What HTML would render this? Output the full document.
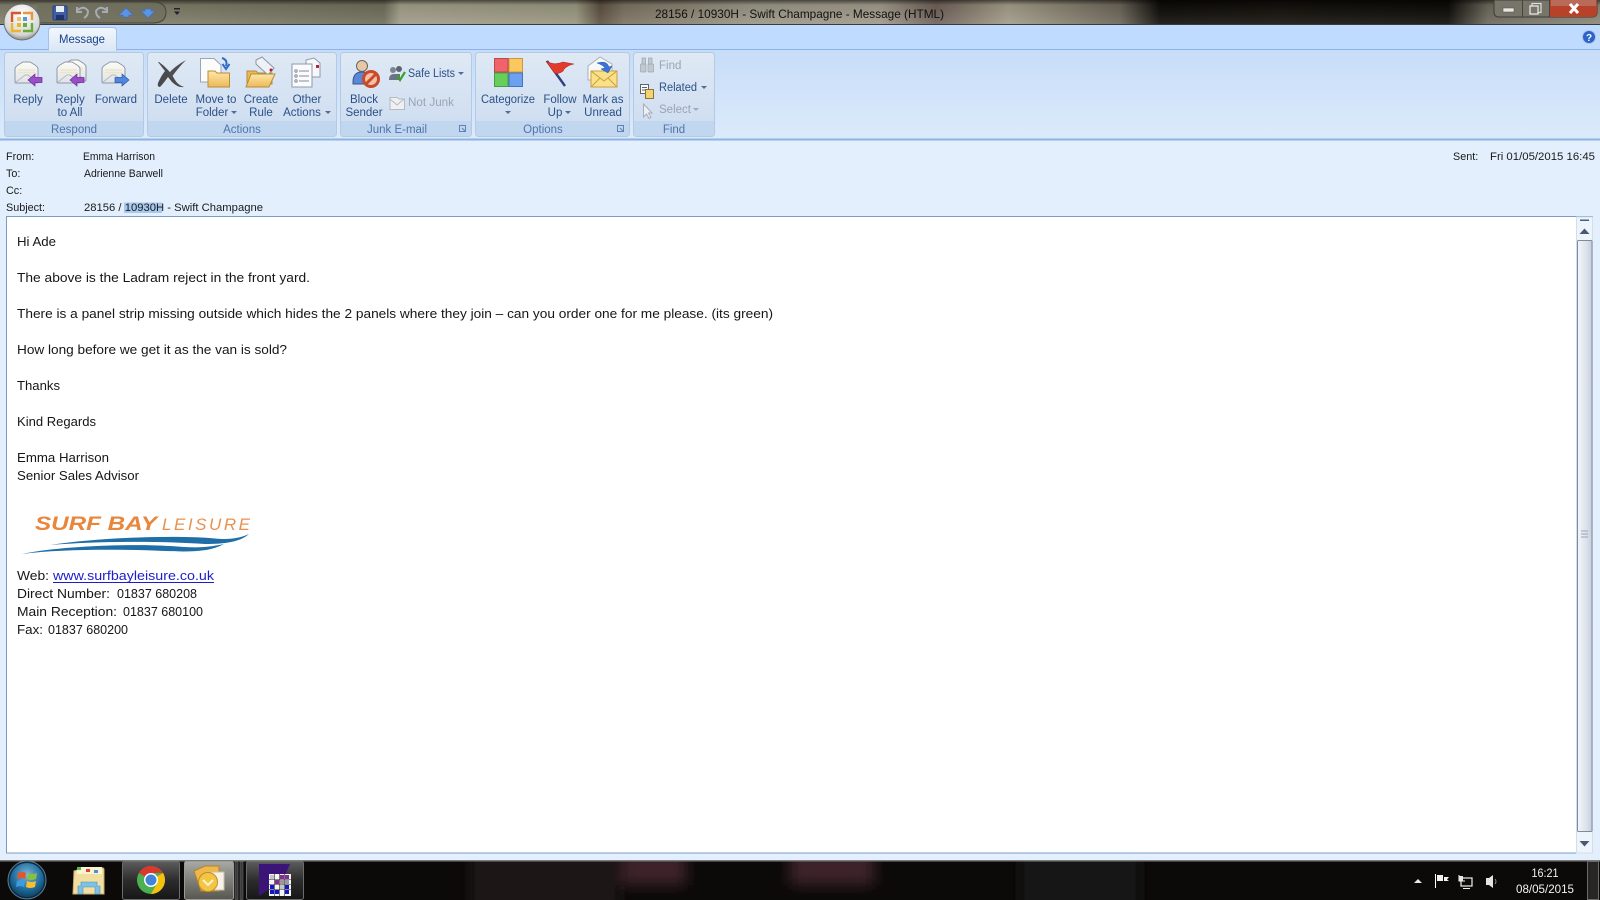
<!DOCTYPE html>
<html lang="en"><head><meta charset="utf-8"><title>28156 / 10930H - Swift Champagne - Message (HTML)</title>
<style>
html,body{margin:0;padding:0;width:1600px;height:900px;overflow:hidden;background:#e3effd}
svg{display:block;position:absolute;left:0;top:0}
text{font-family:"Liberation Sans",Arial,sans-serif}
.rb{font-size:11.5px;fill:#2a5088;text-anchor:middle}
.gl{font-size:11.5px;fill:#4f74aa;text-anchor:middle}
.sm{font-size:11.5px;fill:#2a5088}
.dis{font-size:11.5px;fill:#9aa4b2}
.hd{font-size:10.8px;fill:#1a1a1a}
.bd{font-size:13.2px;fill:#161616}
</style></head><body>
<svg width="1600" height="900" viewBox="0 0 1600 900" xmlns="http://www.w3.org/2000/svg">
<defs>
<linearGradient id="tb" x1="0" x2="1" y1="0" y2="0">
<stop offset="0" stop-color="#837f6c"/><stop offset=".09" stop-color="#807d69"/><stop offset=".24" stop-color="#6f6d5a"/><stop offset=".25" stop-color="#a09e88"/><stop offset=".36" stop-color="#98967f"/><stop offset=".375" stop-color="#5c5040"/><stop offset=".39" stop-color="#7b7160"/><stop offset=".47" stop-color="#9a9686"/><stop offset=".55" stop-color="#a09a8a"/><stop offset=".585" stop-color="#6e6058"/><stop offset=".63" stop-color="#a39c88"/><stop offset=".7" stop-color="#6b6558"/><stop offset=".725" stop-color="#0f0d09"/><stop offset=".8" stop-color="#14110c"/><stop offset=".905" stop-color="#0d0c08"/><stop offset=".93" stop-color="#6c685a"/><stop offset="1" stop-color="#8a8878"/>
</linearGradient>
<linearGradient id="tv" x1="0" x2="0" y1="0" y2="1"><stop offset="0" stop-color="#000" stop-opacity=".55"/><stop offset=".2" stop-color="#000" stop-opacity=".08"/><stop offset="1" stop-color="#fff" stop-opacity=".1"/></linearGradient>
<linearGradient id="rib" x1="0" x2="0" y1="0" y2="1"><stop offset="0" stop-color="#c6dcf8"/><stop offset="1" stop-color="#dcebfb"/></linearGradient>
<linearGradient id="grp" x1="0" x2="0" y1="0" y2="1"><stop offset="0" stop-color="#dfe9f5"/><stop offset="1" stop-color="#ccdcf0"/></linearGradient>
<linearGradient id="tab" x1="0" x2="0" y1="0" y2="1"><stop offset="0" stop-color="#f2f7fd"/><stop offset="1" stop-color="#dbe7f6"/></linearGradient>
<linearGradient id="thumb" x1="0" x2="1" y1="0" y2="0"><stop offset="0" stop-color="#f3f6fa"/><stop offset=".6" stop-color="#dde3ec"/><stop offset="1" stop-color="#c6cedb"/></linearGradient>
<linearGradient id="env" x1="0" x2="0" y1="0" y2="1"><stop offset="0" stop-color="#fdfcf5"/><stop offset="1" stop-color="#dfe3e8"/></linearGradient>
<linearGradient id="fold" x1="0" x2="0" y1="0" y2="1"><stop offset="0" stop-color="#fde6a8"/><stop offset="1" stop-color="#eeb957"/></linearGradient>
<linearGradient id="btn" x1="0" x2="0" y1="0" y2="1"><stop offset="0" stop-color="#5c5c5c"/><stop offset=".5" stop-color="#2c2c2c"/><stop offset="1" stop-color="#161616"/></linearGradient>
<linearGradient id="btn2" x1="0" x2="0" y1="0" y2="1"><stop offset="0" stop-color="#a9a9a5"/><stop offset=".5" stop-color="#7f7f7a"/><stop offset="1" stop-color="#575750"/></linearGradient>
<radialGradient id="orb" cx=".5" cy=".35" r=".7"><stop offset="0" stop-color="#7fb6d6"/><stop offset=".6" stop-color="#1f6d9f"/><stop offset="1" stop-color="#0c3958"/></radialGradient>
<radialGradient id="oorb" cx=".5" cy=".3" r=".7"><stop offset="0" stop-color="#ffffff"/><stop offset=".8" stop-color="#d5d7d6"/><stop offset="1" stop-color="#8b8e8a"/></radialGradient>
<filter id="bl" x="-30%" y="-30%" width="160%" height="160%"><feGaussianBlur stdDeviation="7"/></filter>
<g id="envl"><path d="M0 7 Q0 5 3 3 L8 0 H15 L20 3 Q23 5 23 7 V20 Q23 21 22 21 H1 Q0 21 0 20Z" fill="url(#env)" stroke="#8f98a4" stroke-width="1"/><path d="M3 8 H20 M3 10.500 H20" stroke="#ece5c8" stroke-width="1.500"/><path d="M0.500 20.500 L10 13 H13 L22.500 20.500" fill="none" stroke="#b4bac4"/></g>
<path id="arl" d="M0 6 L7 0 V3.500 H14 V8.500 H7 V12Z" fill="#9a4fc8" stroke="#6d2a9c" stroke-width=".7"/>
<path id="arr" d="M14 6 L7 0 V3.500 H0 V8.500 H7 V12Z" fill="#4f87dc" stroke="#2c5aa8" stroke-width=".7"/>
<path id="dd" d="M0 0 H6 L3 3Z" fill="#4d6e9c"/>
</defs>

<!-- title bar -->
<rect width="1600" height="25" fill="url(#tb)"/>
<rect width="1600" height="25" fill="url(#tv)"/>
<rect y="24" width="1600" height="1" fill="#3a3a36"/>
<text x="655" y="18" font-size="12" fill="#111" textLength="289" lengthAdjust="spacingAndGlyphs">28156 / 10930H - Swift Champagne - Message (HTML)</text>

<!-- window controls -->
<g>
<path d="M1494 0 H1597 V12 Q1597 17 1592 17 H1499 Q1494 17 1494 12Z" fill="#77756a" stroke="#3c3c38"/>
<path d="M1550 0 H1597 V12 Q1597 17 1592 17 H1550Z" fill="#b8412a"/>
<path d="M1551 0 H1596 V6 H1551Z" fill="#b96a58"/>
<path d="M1522.500 0 V17 M1549.500 0 V17" stroke="#44443e"/>
<rect x="1503" y="8" width="11" height="4" fill="#e8e8e4" stroke="#555" stroke-width=".6"/>
<rect x="1532" y="3.500" width="9" height="9" fill="none" stroke="#ddd" stroke-width="1.200"/>
<rect x="1530" y="6" width="8" height="8" fill="#77756a" stroke="#eee" stroke-width="1.200"/>
<path d="M1570 4 L1578 13 M1578 4 L1570 13" stroke="#fff" stroke-width="3"/>
</g>

<!-- ribbon -->
<rect y="25" width="1600" height="25" fill="#bfdbff"/>
<rect y="49" width="1600" height="91" fill="url(#rib)"/>
<rect y="49" width="1600" height="1" fill="#8db2e3"/>
<rect y="138.500" width="1600" height="2" fill="#8db2e3"/>
<path d="M48.500 50 V31 Q48.500 27.500 52 27.500 H112 Q116.500 27.500 116.500 31 V50Z" fill="url(#tab)" stroke="#a5c2e6"/>
<rect x="49" y="48" width="67" height="3" fill="#dde8f5"/>
<text x="82" y="43" text-anchor="middle" font-size="12" fill="#15428b" textLength="46" lengthAdjust="spacingAndGlyphs">Message</text>
<circle cx="1589" cy="37" r="6.500" fill="#2b63c8" stroke="#a8c4ee"/><text x="1589" y="41" text-anchor="middle" font-size="10" font-weight="bold" fill="#fff">?</text>

<!-- groups -->
<g stroke="#b4c9e3" fill="url(#grp)">
<rect x="4.500" y="52.500" width="139" height="84" rx="3"/>
<rect x="147.500" y="52.500" width="189" height="84" rx="3"/>
<rect x="340.500" y="52.500" width="131" height="84" rx="3"/>
<rect x="475.500" y="52.500" width="154" height="84" rx="3"/>
<rect x="633.500" y="52.500" width="81" height="84" rx="3"/>
</g>
<g fill="#c1d7f0">
<path d="M5 121 H143 V133 Q143 136 140 136 H8 Q5 136 5 133Z"/>
<path d="M148 121 H336 V133 Q336 136 333 136 H151 Q148 136 148 133Z"/>
<path d="M341 121 H471 V133 Q471 136 468 136 H344 Q341 136 341 133Z"/>
<path d="M476 121 H629 V133 Q629 136 626 136 H479 Q476 136 476 133Z"/>
<path d="M634 121 H714 V133 Q714 136 711 136 H637 Q634 136 634 133Z"/>
</g>
<text class="gl" x="74" y="133">Respond</text>
<text class="gl" x="242" y="133">Actions</text>
<text class="gl" x="397" y="133">Junk E-mail</text>
<text class="gl" x="543" y="133">Options</text>
<text class="gl" x="674" y="133">Find</text>
<g fill="none" stroke="#5f82b3"><rect x="459.500" y="125.500" width="6" height="6"/><rect x="617.500" y="125.500" width="6" height="6"/><path d="M462 128 L465 131 M620 128 L623 131"/></g>

<!-- QAT -->
<path d="M37 2 H152 Q166 2 166 12.500 Q166 23 152 23 H37" fill="#6f6d5c" fill-opacity=".75" stroke="#45443b"/>
<g>
<rect x="53" y="6" width="14" height="14" rx="1" fill="#3e5fa6" stroke="#2a4179"/><rect x="56" y="6" width="8" height="6" fill="#e6edf7"/><rect x="56" y="15" width="8" height="5" fill="#1f3468"/>
<path d="M78 10 Q84 5 88 11 Q88 16 84 18 M77 7 V12 H82" fill="none" stroke="#a4adb4" stroke-width="2"/>
<path d="M106 10 Q100 5 96 11 Q96 16 100 18 M107 7 V12 H102" fill="none" stroke="#a4adb4" stroke-width="2"/>
<path d="M126 8 L133 15 H129 V17 H123 V15 H119Z" fill="#5a94e6" stroke="#3d6fbc" stroke-width=".6"/>
<path d="M148 18 L155 11 H151 V9 H145 V11 H141Z" fill="#5a94e6" stroke="#3d6fbc" stroke-width=".6"/>
<rect x="174" y="8" width="6" height="1.500" fill="#223"/><path d="M174 11.500 H180 L177 15Z" fill="#223"/>
</g>
<circle cx="22" cy="22" r="18" fill="url(#oorb)" stroke="#6f726d"/>
<g stroke-width="2.400" fill="none">
<path d="M21 13 H12 V22" stroke="#d8562a"/><path d="M12 23 V31 H21" stroke="#f0b428"/><path d="M23 13 H32 V20" stroke="#e59a3c"/><path d="M32 23 V31 H23" stroke="#6aaa36"/>
<rect x="17" y="17" width="4" height="4" fill="#e7c66a" stroke="none"/><rect x="23" y="17" width="4" height="4" fill="#5b96d8" stroke="none"/><rect x="17" y="23" width="4" height="4" fill="#f0b428" stroke="none"/><rect x="23" y="23" width="4" height="4" fill="#6aaa36" stroke="none"/>
</g>

<!-- Respond icons -->
<use href="#envl" x="15" y="62"/><use href="#arl" x="28" y="74"/>
<text class="rb" x="28" y="103">Reply</text>
<use href="#envl" x="63" y="60"/><use href="#envl" x="57" y="62"/><use href="#arl" x="70" y="74"/>
<text class="rb" x="70" y="103">Reply</text><text class="rb" x="70" y="116">to All</text>
<use href="#envl" x="102" y="62"/><use href="#arr" x="115" y="74"/>
<text class="rb" x="116" y="103">Forward</text>

<!-- Actions icons -->
<path d="M159 62 Q170 70 175 80 Q178 85 184 87 Q178 88 172 82 L168 77 Q163 84 160 87 Q157 87 158 83 Q161 76 165 71 Q161 66 158 62Z" fill="#4a4a4a"/>
<path d="M186 60 Q175 66 168 74 L171 78 Q178 68 186 60Z" fill="#4f4f4f"/>
<text class="rb" x="171" y="103">Delete</text>
<path d="M200.500 58.500 H214 L221 65 V82 H200.500Z" fill="#fcfcfd" stroke="#9aa5b5"/>
<path d="M208 71 H215 L217 73 H229.500 V87 H208Z" fill="url(#fold)" stroke="#b68d3c"/>
<path d="M222 58 Q228 60 226 66 M222.500 64 L226 69 L229.500 64" fill="none" stroke="#2f6cc6" stroke-width="2"/>
<text class="rb" x="216" y="103">Move to</text><text class="rb" x="212" y="116">Folder</text><use href="#dd" x="231" y="111"/>
<path d="M247 71 H256 L258 73 H272 V84 H247Z" fill="#e9b956" stroke="#b68d3c"/>
<path d="M256 60 L262 57 L274 68 L268 75 L256 64Z" fill="#eef2f7" stroke="#8c97a6"/>
<circle cx="271" cy="70" r="1.500" fill="#b81f3e"/>
<path d="M251 74 H275 L269 87 H246Z" fill="url(#fold)" stroke="#b68d3c"/>
<text class="rb" x="261" y="103">Create</text><text class="rb" x="261" y="116">Rule</text>
<path d="M306 60 L314 58 L320 63 V77 H306Z" fill="#f7f8fa" stroke="#8e9aaa"/><rect x="316" y="65" width="3" height="3" fill="#b81f3e"/>
<rect x="292" y="64" width="20" height="23" fill="#fbfbfd" stroke="#8e9aaa"/>
<path d="M299 71 H309 M299 76 H309 M299 81 H309" stroke="#7e8b9b"/><g fill="none" stroke="#7e8b9b"><circle cx="296" cy="71" r="1.200"/><circle cx="296" cy="76" r="1.200"/><circle cx="296" cy="81" r="1.200"/></g>
<text class="rb" x="307" y="103">Other</text><text class="rb" x="302" y="116">Actions</text><use href="#dd" x="325" y="111"/>

<!-- Junk -->
<circle cx="362" cy="66" r="5.500" fill="#e8c7a8" stroke="#6c6358"/>
<path d="M353 82 Q353 72 362 72 Q370 72 371 78 L366 84 H353Z" fill="#5d86d6" stroke="#38568f"/>
<circle cx="371" cy="79" r="7.500" fill="#f2c0a8" stroke="#c84a28" stroke-width="3"/><path d="M366 84 L376 74" stroke="#c84a28" stroke-width="3"/>
<text class="rb" x="364" y="103">Block</text><text class="rb" x="364" y="116">Sender</text>
<circle cx="393" cy="70" r="3" fill="#7e8590"/><circle cx="399" cy="69" r="3" fill="#5e6570"/><path d="M389 80 Q389 74 394 74 H400 V80Z" fill="#6a7482"/>
<path d="M397 76 L400 80 L405 72" fill="none" stroke="#3aa02e" stroke-width="2.200"/>
<text class="sm" x="408" y="77" textLength="47" lengthAdjust="spacingAndGlyphs">Safe Lists</text><use href="#dd" x="458" y="72"/>
<path d="M390 97.500 H397 L399 99 H404.500 V109.500 H390Z" fill="#eef0f2" stroke="#b4bac2"/><path d="M390 99 L397 105 L404 99" fill="none" stroke="#b4bac2"/>
<text class="dis" x="408" y="106" textLength="46" lengthAdjust="spacingAndGlyphs">Not Junk</text>

<!-- Options -->
<rect x="494.500" y="58.500" width="13.500" height="13.500" fill="#f0636b" stroke="#b54a50"/>
<rect x="509" y="58.500" width="13.500" height="13.500" fill="#fcc761" stroke="#c89a3a"/>
<rect x="494.500" y="73" width="13.500" height="13.500" fill="#66cf5c" stroke="#4a9d42"/>
<rect x="509" y="73" width="13.500" height="13.500" fill="#6ca0f0" stroke="#4574bb"/>
<text class="rb" x="508" y="103" textLength="54" lengthAdjust="spacingAndGlyphs">Categorize</text><use href="#dd" x="505" y="111"/>
<path d="M547 61 L565 86" stroke="#34407a" stroke-width="2.400"/>
<path d="M546 61 Q554 66 563 62 L574 64 Q565 66 563 71 Q556 76 553 71Z" fill="#e33a2c" stroke="#aa2a20" stroke-width=".6"/>
<text class="rb" x="560" y="103">Follow</text><text class="rb" x="555" y="116">Up</text><use href="#dd" x="565" y="111"/>
<path d="M588 66 L600 57 L612 64 V80 H588Z" fill="#f7f8f8" stroke="#a8b0b8"/>
<rect x="591" y="71" width="26" height="16" fill="#fbe08a" stroke="#c9a13c"/>
<path d="M591 71 L604 81 L617 71 M591 87 L600 78 M617 87 L608 78" fill="none" stroke="#c9a13c"/>
<path d="M597 63 Q607 60 609 67 L612 66 L608 73 L601 69 L605 68 Q603 65 597 63Z" fill="#3b74d6" stroke="#2a58ad" stroke-width=".5"/>
<text class="rb" x="603" y="103">Mark as</text><text class="rb" x="603" y="116">Unread</text>

<!-- Find group -->
<g fill="#c2c8d0" stroke="#9ba4b0" stroke-width=".7"><rect x="640.500" y="64" width="5.500" height="8" rx="1"/><rect x="648" y="64" width="5.500" height="8" rx="1"/><rect x="642" y="58" width="3.500" height="6"/><rect x="648.500" y="58" width="3.500" height="6"/></g>
<text class="dis" x="659" y="69">Find</text>
<rect x="640.500" y="84.500" width="8" height="9" fill="#fafafa" stroke="#5c6470"/><path d="M642 87.500 H647 M642 90 H647" stroke="#5c6470"/><rect x="645.500" y="89.500" width="8" height="9" fill="#f3d271" stroke="#8f7436"/>
<text class="sm" x="659" y="91" textLength="38" lengthAdjust="spacingAndGlyphs">Related</text><use href="#dd" x="701" y="86"/>
<path d="M643.500 104 V117 L646.500 114 L649 118.500 L651 117.500 L648.500 113 H652Z" fill="#eef1f4" stroke="#a6aeb8"/>
<text class="dis" x="659" y="113">Select</text><use href="#dd" x="693" y="108" opacity=".45"/>

<!-- message header -->
<rect y="140.500" width="1600" height="76" fill="#e3effd"/>
<text class="hd" x="6" y="160">From:</text><text class="hd" x="6" y="177">To:</text><text class="hd" x="6" y="194">Cc:</text><text class="hd" x="6" y="211">Subject:</text>
<text class="hd" x="83" y="160" textLength="72" lengthAdjust="spacingAndGlyphs">Emma Harrison</text>
<text class="hd" x="84" y="177" textLength="79" lengthAdjust="spacingAndGlyphs">Adrienne Barwell</text>
<rect x="124" y="202.500" width="38" height="10.500" fill="#a8c8ee"/>
<text class="hd" x="84" y="211" textLength="179" lengthAdjust="spacingAndGlyphs">28156 / 10930H - Swift Champagne</text>
<text class="hd" x="1453" y="160">Sent:</text>
<text class="hd" x="1490" y="160" textLength="105" lengthAdjust="spacingAndGlyphs">Fri 01/05/2015 16:45</text>

<!-- body frame -->
<rect x="6.500" y="216.500" width="1586" height="636.500" fill="#fff" stroke="#7a9cc4"/>
<text class="bd" x="17" y="246" textLength="39" lengthAdjust="spacingAndGlyphs">Hi Ade</text>
<text class="bd" x="17" y="282" textLength="293" lengthAdjust="spacingAndGlyphs">The above is the Ladram reject in the front yard.</text>
<text class="bd" x="17" y="318" textLength="756" lengthAdjust="spacingAndGlyphs">There is a panel strip missing outside which hides the 2 panels where they join – can you order one for me please. (its green)</text>
<text class="bd" x="17" y="354" textLength="270" lengthAdjust="spacingAndGlyphs">How long before we get it as the van is sold?</text>
<text class="bd" x="17" y="390" textLength="43" lengthAdjust="spacingAndGlyphs">Thanks</text>
<text class="bd" x="17" y="426" textLength="79" lengthAdjust="spacingAndGlyphs">Kind Regards</text>
<text class="bd" x="17" y="462" textLength="92" lengthAdjust="spacingAndGlyphs">Emma Harrison</text>
<text class="bd" x="17" y="480" textLength="122" lengthAdjust="spacingAndGlyphs">Senior Sales Advisor</text>

<!-- logo -->
<text x="35" y="530" font-size="19" font-weight="bold" font-style="italic" fill="#e8863c" textLength="122" lengthAdjust="spacingAndGlyphs">SURF BAY</text>
<text x="162" y="530" font-size="17" font-style="italic" fill="#e8914f" textLength="88" lengthAdjust="spacing">LEISURE</text>
<path d="M50 545 C100 537 180 535 215 538.500 C230 540 240 538 249 534 C240 542 225 544 205 544 C160 541 100 541 50 545Z" fill="#1f6ea8"/>
<path d="M22 554 C60 546 130 543.500 170 546 C195 548 205 548 224 544 C210 552 190 552 165 551 C120 549 60 549 22 554Z" fill="#1f6ea8"/>

<text class="bd" x="17" y="580" textLength="32" lengthAdjust="spacingAndGlyphs">Web:</text>
<text class="bd" x="53" y="580" style="fill:#1c1ccf" textLength="161" lengthAdjust="spacingAndGlyphs">www.surfbayleisure.co.uk</text>
<rect x="53" y="582" width="161" height="1" fill="#1c1ccf"/>
<text class="bd" x="17" y="598" textLength="93" lengthAdjust="spacingAndGlyphs">Direct Number:</text><text class="bd" x="117" y="598" textLength="80" lengthAdjust="spacingAndGlyphs">01837 680208</text>
<text class="bd" x="17" y="616" textLength="100" lengthAdjust="spacingAndGlyphs">Main Reception:</text><text class="bd" x="123" y="616" textLength="80" lengthAdjust="spacingAndGlyphs">01837 680100</text>
<text class="bd" x="17" y="634" textLength="26" lengthAdjust="spacingAndGlyphs">Fax:</text><text class="bd" x="48" y="634" textLength="80" lengthAdjust="spacingAndGlyphs">01837 680200</text>

<!-- scrollbar -->
<rect x="1576.500" y="217" width="16" height="636" fill="#eef4fb" stroke="#d2deed"/>
<rect x="1580" y="219.500" width="9" height="1.500" fill="#3f5f8e"/>
<path d="M1584.500 228.500 L1589.500 234 H1579.500Z" fill="#4a5a74"/>
<rect x="1577.500" y="240.500" width="14.500" height="591" rx="1" fill="url(#thumb)" stroke="#7d8ba0"/>
<path d="M1581 531 H1588 M1581 534 H1588 M1581 537 H1588" stroke="#97a4b6"/>
<path d="M1579.500 841 H1589.500 L1584.500 846.500Z" fill="#4a5a74"/>

<!-- taskbar -->
<rect y="860" width="1600" height="40" fill="#0b0a09"/>
<svg x="0" y="861" width="1600" height="39">
<g filter="url(#bl)">
<rect x="622" y="-10" width="64" height="34" fill="#3c2029"/>
<rect x="790" y="-10" width="84" height="34" fill="#3c2029"/>
<rect x="470" y="-10" width="150" height="60" fill="#1a1918"/>
<rect x="1020" y="-10" width="120" height="60" fill="#161514"/>
</g>
</svg>
<rect y="860" width="1600" height="1.500" fill="#7d7d7a"/>

<circle cx="27" cy="880" r="19" fill="#0e2c42" stroke="#5d7f93"/>
<circle cx="27" cy="880" r="17" fill="url(#orb)"/>
<path d="M18 873 Q22 871 26 873 L25 879 Q21 877 17 879Z" fill="#e0562e"/>
<path d="M28 873 Q32 875 37 873 L36 879 Q31 881 27 879Z" fill="#84c341"/>
<path d="M17 881 Q21 879 25 881 L24 887 Q20 885 16 887Z" fill="#3f9be0"/>
<path d="M27 881 Q31 883 36 881 L35 887 Q30 889 26 887Z" fill="#f4c02c"/>

<path d="M74 871 L84 868 H103 Q104 868 104 870 V894 H73Z" fill="#f1dfa2" stroke="#c7ae6a"/>
<rect x="77" y="867" width="25" height="7" fill="#fbf4cd"/>
<rect x="77" y="867" width="4" height="3" fill="#5cb84a"/><rect x="86" y="869" width="4" height="3" fill="#d8443a"/><rect x="94" y="870" width="4" height="3" fill="#4a90d9"/>
<path d="M78 894 V886 H81 V882 H97 V886 H100 V894 H95 V887 H83 V894Z" fill="#7cc2e6" stroke="#4b8fb8" stroke-width=".6"/>

<rect x="122.500" y="861.500" width="57" height="38" rx="2" fill="url(#btn)" stroke="#6c6c6c"/>
<circle cx="151" cy="880" r="14" fill="#4caf50"/>
<path d="M151 866 A14 14 0 0 1 163.100 873 H151 A7 7 0 0 0 144.900 876.500 L138.900 873 A14 14 0 0 1 151 866Z" fill="#d9382c"/>
<path d="M163.100 873 A14 14 0 0 1 151 894 L157 883.500 A7 7 0 0 0 157 876.500 Z" fill="#f4c20d"/>
<circle cx="151" cy="880" r="7" fill="#fff"/><circle cx="151" cy="880" r="5.500" fill="#4285d8"/>

<rect x="184.500" y="861.500" width="49" height="38" rx="2" fill="url(#btn2)" stroke="#9a9a96"/>
<path d="M194 871 L205 866 H219 V891 H201Z" fill="#f0b84a" stroke="#b58428"/>
<path d="M207 872 L224 872 V890 H207Z" fill="#f6f3e6" stroke="#c8c0a8"/>
<circle cx="208" cy="882" r="9.500" fill="#f4c545" stroke="#c08f20"/>
<path d="M203 880 L208 885 L213 880" fill="none" stroke="#fff5cc" stroke-width="2"/>
<rect x="235" y="861.500" width="3" height="38" fill="#3a3a3a" stroke="#666" stroke-width=".6"/>
<rect x="240" y="861.500" width="3" height="38" fill="#3a3a3a" stroke="#666" stroke-width=".6"/>

<rect x="246.500" y="861.500" width="57" height="38" rx="2" fill="url(#btn)" stroke="#6c6c6c"/>
<path d="M259 864 H290 L283 880 L259 896Z" fill="#3b1478"/>
<g>
<rect x="269" y="874" width="22" height="22" fill="#f4f4f4"/>
<rect x="270" y="875" width="4" height="4" fill="#c4c4c4"/><rect x="280" y="875" width="4" height="4" fill="#8a2a94"/><rect x="285" y="875" width="4" height="4" fill="#8a2a94"/>
<rect x="275" y="880" width="4" height="4" fill="#8a2a94"/><rect x="280" y="880" width="4" height="4" fill="#9a9a9a"/><rect x="285" y="880" width="4" height="4" fill="#9a9a9a"/>
<rect x="270" y="885" width="4" height="4" fill="#1414c8"/><rect x="280" y="885" width="4" height="4" fill="#c4c4c4"/><rect x="285" y="885" width="4" height="4" fill="#1414c8"/>
<rect x="270" y="890" width="4" height="4" fill="#1414c8"/><rect x="275" y="890" width="4" height="4" fill="#1414c8"/><rect x="285" y="890" width="4" height="4" fill="#1414c8"/>
<path d="M269 879.500 H291 M269 884.500 H291 M269 889.500 H291 M274.500 874 V896 M279.500 874 V896 M284.500 874 V896" stroke="#222" stroke-width=".6"/>
</g>

<!-- tray -->
<path d="M1414 883 L1418 879 L1422 883Z" fill="#e8e8e8"/>
<path d="M1435.500 874 V888" stroke="#fff"/><path d="M1437 875 H1443 V881 H1437Z M1444 877 H1449 L1447 879.500 L1449 881 H1444Z" fill="#f2f2f2"/>
<rect x="1461" y="878" width="11" height="8" fill="none" stroke="#f0f0f0" stroke-width="1.200"/><path d="M1459 875 V881 H1465" fill="none" stroke="#f0f0f0"/><rect x="1459" y="876" width="4" height="5" fill="#e8e8e8"/><path d="M1463 888.500 H1470" stroke="#f0f0f0"/>
<path d="M1486 878 H1489 L1493 875 V888 L1489 885 H1486Z" fill="#e4e4e4"/><path d="M1495 879 Q1497 881.500 1495 884" fill="none" stroke="#888"/>
<text x="1545" y="877" text-anchor="middle" font-size="12" fill="#f2f2f2" textLength="27" lengthAdjust="spacingAndGlyphs">16:21</text>
<text x="1545" y="893" text-anchor="middle" font-size="12" fill="#f2f2f2" textLength="58" lengthAdjust="spacingAndGlyphs">08/05/2015</text>
<rect x="1587.500" y="861.500" width="11" height="38" fill="#262624" stroke="#6a6a68"/>
</svg>
</body></html>
